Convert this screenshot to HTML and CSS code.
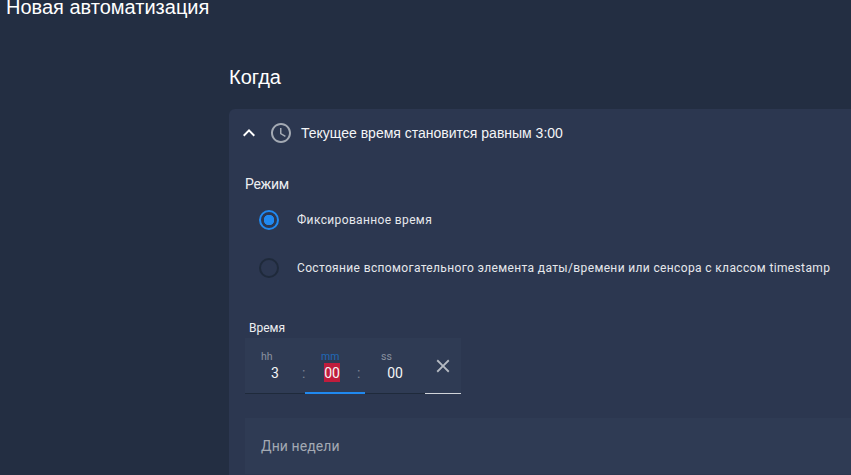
FILE: index.html
```html
<!DOCTYPE html>
<html lang="ru">
<head>
    <meta charset="UTF-8">
    <meta name="viewport" content="width=device-width, initial-scale=1.0">
    <title>Новая автоматизация</title>
    <link rel="stylesheet" href="styles.css">
</head>
<body>
    <h1 class="page-title">Новая автоматизация</h1>
    <main class="content">
        <h2 class="section-title">Когда</h2>
        <div class="card">
            <div class="card-header">
                <svg class="chevron" width="24" height="24" viewBox="0 0 24 24"><path fill="#fff" d="M7.41 15.41L12 10.83l4.59 4.58L18 14l-6-6-6 6z"/></svg>
                <svg class="clock" width="24" height="24" viewBox="0 0 24 24"><path fill="#a3a9b3" d="M12 20c4.4 0 8-3.6 8-8s-3.6-8-8-8-8 3.6-8 8 3.6 8 8 8m0-18c5.5 0 10 4.5 10 10s-4.500 10-10 10S2 17.500 2 12 6.500 2 12 2m.5 10.200l4.300 2.500-.8 1.300-5-3V7h1.500v5.200z"/></svg>
                <span class="card-title">Текущее время становится равным 3:00</span>
            </div>
            <div class="card-body">
                <div class="mode-label">Режим</div>
                <div class="radio-row">
                    <span class="radio radio-on"></span>
                    <span class="radio-text">Фиксированное время</span>
                </div>
                <div class="radio-row">
                    <span class="radio"></span>
                    <span class="radio-text">Состояние вспомогательного элемента даты/времени или сенсора с классом timestamp</span>
                </div>
                <div class="time-label">Время</div>
                <div class="time-input">
                    <div class="time-cell">
                        <span class="unit">hh</span>
                        <span class="value">3</span>
                    </div>
                    <span class="colon">:</span>
                    <div class="time-cell time-cell-active">
                        <span class="unit">mm</span>
                        <span class="value value-mm"><span class="selected">00</span></span>
                    </div>
                    <span class="colon colon-second">:</span>
                    <div class="time-cell">
                        <span class="unit">ss</span>
                        <span class="value">00</span>
                    </div>
                    <div class="clear-cell">
                        <svg width="22" height="22" viewBox="0 0 24 24"><path fill="#b5bac2" d="M19 6.410L17.590 5 12 10.590 6.410 5 5 6.410 10.590 12 5 17.590 6.410 19 12 13.410 17.590 19 19 17.590 13.410 12z"/></svg>
                    </div>
                </div>
                <div class="weekdays">Дни недели</div>
            </div>
        </div>
    </main>
</body>
</html>
```

FILE: styles.css
```css
html, body {
    height: 100%;
}
body {
    margin: 0;
    overflow: hidden;
    background-color: #232e42;
    color: #fff;
    font-family: 'Roboto', sans-serif;
}
.page-title {
    margin: 0 0 0 6px;
    height: 14px;
    line-height: 14px;
    font-family: 'Liberation Sans', sans-serif;
    font-size: 20px;
    font-weight: 400;
    white-space: nowrap;
}
.content {
    margin-left: 229px;
    width: 622px;
    overflow: hidden;
}
.section-title {
    margin: 0;
    padding-top: 51px;
    height: 44px;
    line-height: 24px;
    font-family: 'Liberation Sans', sans-serif;
    font-size: 20px;
    font-weight: 400;
}
.card {
    background-color: #2c3750;
    border-radius: 6px 0 0 0;
    height: 366px;
    overflow: hidden;
}
.card-header {
    display: flex;
    align-items: center;
    height: 48px;
    padding-left: 8px;
}
.chevron {
    flex: none;
}
.clock {
    flex: none;
    margin-left: 8px;
}
.card-title {
    margin-left: 8px;
    font-family: 'Liberation Sans', sans-serif;
    font-size: 14px;
    color: #f4f5f7;
}
.card-body {
    padding: 18px 0 0 16px;
}
.mode-label {
    height: 18px;
    margin-bottom: 3px;
    line-height: 18px;
    font-size: 14px;
    letter-spacing: -0.3px;
    color: #eceef1;
}
.radio-row {
    display: flex;
    align-items: center;
    height: 48px;
    padding-left: 14px;
}
.radio {
    flex: none;
    box-sizing: border-box;
    width: 20px;
    height: 20px;
    border: 2px solid #1f2a3b;
    border-radius: 50%;
}
.radio-on {
    border-color: #2089f0;
    background: radial-gradient(circle, #2089f0 0, #2089f0 5px, transparent 5.500px);
}
.radio-text {
    margin-left: 18px;
    font-size: 12px;
    letter-spacing: 0.36px;
    color: #e6e8ec;
    white-space: nowrap;
}
.time-label {
    margin: 27px 0 0 4px;
    height: 19px;
    line-height: 18px;
    font-size: 12px;
    color: #eceef1;
}
.time-input {
    display: flex;
    width: 216px;
    height: 56px;
    background-color: #2f3b54;
    border-bottom: 1px solid #1f2a3b;
    box-sizing: border-box;
}
.time-cell {
    box-sizing: border-box;
    width: 60px;
    height: 56px;
    padding-top: 13px;
    text-align: center;
}
.time-cell-active {
    border-bottom: 2px solid #2089f0;
}
.time-cell-active .unit {
    color: #2069b8;
}
.unit {
    display: block;
    height: 12px;
    line-height: 12px;
    font-size: 10.500px;
    color: #8a92a0;
    text-align: left;
    padding-left: 16px;
}
.value {
    display: block;
    height: 19px;
    line-height: 21px;
    font-size: 14px;
    color: #f4f5f7;
}
.value-mm {
    padding-right: 6px;
}
.selected {
    display: inline-block;
    height: 19px;
    background-color: #c01c3c;
}
.colon {
    width: 0;
    padding-top: 26px;
    font-size: 14px;
    line-height: 18px;
    color: #7d8595;
    text-indent: -3px;
}
.colon-second {
    text-indent: -8px;
}
.clear-cell {
    display: flex;
    align-items: center;
    justify-content: center;
    margin-left: auto;
    width: 36px;
    height: 56px;
    box-sizing: border-box;
    border-bottom: 1px solid #d0d3d9;
}
.weekdays {
    margin-top: 24px;
    height: 56px;
    line-height: 56px;
    padding-left: 16px;
    background-color: #2f3b54;
    font-size: 14px;
    letter-spacing: 0.1px;
    color: #a3a9b3;
}
```
